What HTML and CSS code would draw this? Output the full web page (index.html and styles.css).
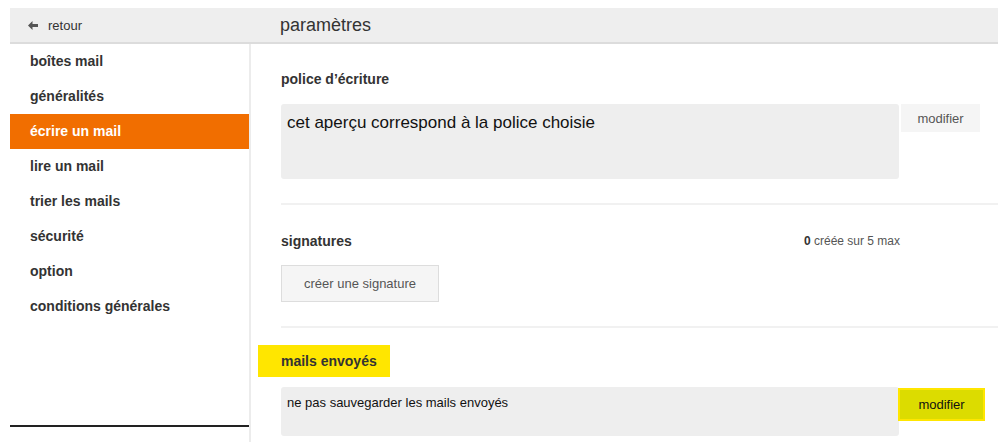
FILE: index.html
```html
<!DOCTYPE html>
<html lang="fr">
<head>
<meta charset="utf-8">
<title>paramètres</title>
<link rel="stylesheet" href="styles.css">
</head>
<body>
<div class="page">
  <header class="topbar">
    <div class="back">
      <svg class="back-icon" width="10" height="9" viewBox="0 0 10 9" aria-hidden="true">
        <path d="M0 4.5 L4.5 0 L4.5 3 L10 3 L10 6 L4.5 6 L4.5 9 Z" fill="#555"/>
      </svg>
      <span>retour</span>
    </div>
    <h1 class="title">paramètres</h1>
  </header>
  <div class="main">
    <nav class="sidebar">
      <ul class="menu">
        <li class="item">boîtes mail</li>
        <li class="item">généralités</li>
        <li class="item active">écrire un mail</li>
        <li class="item">lire un mail</li>
        <li class="item">trier les mails</li>
        <li class="item">sécurité</li>
        <li class="item">option</li>
        <li class="item">conditions générales</li>
      </ul>
      <div class="sidebar-foot"></div>
    </nav>
    <section class="content">
      <div class="block first">
        <h2 class="block-title">police d’écriture</h2>
        <div class="row">
          <div class="box preview">cet aperçu correspond à la police choisie</div>
          <button class="btn-modify">modifier</button>
        </div>
      </div>
      <div class="block second">
        <div class="title-row">
          <h2 class="block-title">signatures</h2>
          <span class="count"><b>0</b> créée sur 5 max</span>
        </div>
        <button class="btn-create">créer une signature</button>
      </div>
      <div class="block last">
        <h2 class="block-title highlight">mails envoyés</h2>
        <div class="row">
          <div class="box sent">ne pas sauvegarder les mails envoyés</div>
          <button class="btn-modify yellow">modifier</button>
        </div>
      </div>
    </section>
  </div>
</div>
</body>
</html>
```
FILE: styles.css
```css
* { box-sizing: border-box; }
html, body { margin: 0; padding: 0; background: #fff; }
body {
  font-family: "Liberation Sans", Arial, sans-serif;
  color: #333;
  overflow: hidden;
}
.page {
  padding: 8px 0 0 10px;
  width: 998px;
  height: 442px;
}
.topbar {
  display: flex;
  align-items: center;
  height: 36px;
  padding-top: 1px;
  background: #eeeeee;
  border-bottom: 2px solid #dcdcdc;
}
.back {
  width: 241px;
  display: flex;
  align-items: center;
  padding-left: 18px;
  font-size: 13px;
  color: #333;
}
.back-icon { margin-right: 10px; }
.title {
  margin: 0 0 0 29px;
  font-size: 18px;
  font-weight: normal;
  color: #333;
}
.main {
  display: flex;
  height: 398px;
}
.sidebar {
  width: 241px;
  border-right: 2px solid #ececec;
  display: flex;
  flex-direction: column;
}
.menu {
  list-style: none;
  margin: 0;
  padding: 0;
}
.item {
  height: 35px;
  line-height: 35px;
  padding-left: 20px;
  font-size: 14px;
  font-weight: bold;
  color: #333;
}
.item.active {
  background: #f16e00;
  color: #fff;
}
.sidebar-foot {
  margin-top: auto;
  margin-bottom: 15px;
  border-top: 2px solid #222;
}
.content {
  flex: 1;
  padding-left: 30px;
}
.block {
  padding: 25px 0 25px;
  border-bottom: 2px solid #f1f1f1;
}
.block.first { padding-top: 26px; padding-bottom: 24px; }
.block.second { padding-top: 27px; padding-bottom: 24px; }
.block.last { border-bottom: none; padding-top: 17px; }
.block-title {
  margin: 0 0 16px;
  font-size: 14px;
  line-height: 18px;
  font-weight: bold;
  color: #333;
}
.row {
  display: flex;
  align-items: flex-start;
}
.box {
  width: 618px;
  background: #eeeeee;
  border-radius: 3px;
  color: #111;
}
.preview {
  height: 75px;
  padding: 8px 6px;
  font-size: 17px;
  line-height: 22px;
}
.sent {
  height: 49px;
  padding: 8px 6px;
  font-size: 13px;
  line-height: 16px;
}
.btn-modify {
  margin-left: 2px;
  width: 79px;
  height: 28px;
  border: none;
  background: #f5f5f5;
  font-family: inherit;
  font-size: 13px;
  color: #555;
  padding: 0;
}
.btn-modify.yellow {
  margin-left: -1px;
  margin-top: 1px;
  width: 87px;
  height: 33px;
  background: #dcdc00;
  border: 2px solid #ffe600;
  color: #111;
}
.title-row {
  display: flex;
  justify-content: space-between;
  align-items: center;
  width: 619px;
  margin-bottom: 15px;
}
.title-row .block-title { margin: 0; }
.count {
  font-size: 12px;
  color: #555;
}
.count b { color: #333; }
.btn-create {
  width: 158px;
  height: 37px;
  background: #f5f5f5;
  border: 1px solid #dddddd;
  font-family: inherit;
  font-size: 13px;
  color: #555;
  padding: 0;
}
.highlight {
  display: inline-block;
  margin: 0 0 10px -23px;
  padding: 7px 13px 7px 23px;
  background: #ffe600;
  line-height: 18px;
}
```
